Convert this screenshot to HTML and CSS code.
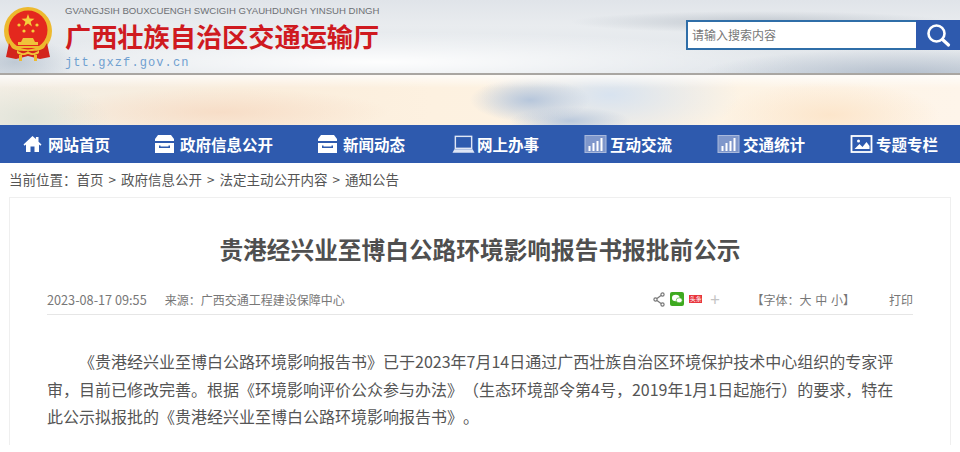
FILE: index.html
```html
<!DOCTYPE html>
<html lang="zh-CN">

<head>
    <meta charset="UTF-8">
    <meta name="viewport" content="width=device-width, initial-scale=1.0">
    <title>贵港经兴业至博白公路环境影响报告书报批前公示</title>
    <link rel="stylesheet" href="styles.css">
</head>

<body>
    <div class="header">
        <div class="top">
            <div class="brand">
                <svg class="emblem" width="50" height="54" viewBox="0 0 50 54">
                    <circle cx="25" cy="24" r="24" fill="#edb92e" />
                    <circle cx="25" cy="23" r="19.500" fill="#e4281e" />
                    <path d="M25 7l1.600 4.600 4.900.1-3.900 3 1.400 4.700-4-2.800-4 2.800 1.400-4.700-3.900-3 4.900-.1z" fill="#f5cf3c" />
                    <circle cx="16" cy="18" r="1.600" fill="#f5cf3c" />
                    <circle cx="34" cy="18" r="1.600" fill="#f5cf3c" />
                    <circle cx="21" cy="24" r="1.600" fill="#f5cf3c" />
                    <circle cx="30" cy="24" r="1.600" fill="#f5cf3c" />
                    <path d="M20 31h10l2 4h3v3H15v-3h3z" fill="#f0c23a" />
                    <path d="M10 39h30v2H10z" fill="#edb92e" />
                    <path d="M6 36l3 5c4 3 10 3 16 3s12 0 16-3l3-5 3 14-10 2-12-3-12 3-10-2z" fill="#d3241c" />
                    <path d="M14 43c4 4 8 4 11 1 3 3 7 3 11-1v3c-4 3-8 2-11 1-3 1-7 2-11-1z" fill="#f0c23a" />
                    <path d="M16 48h3v6h-3zM31 48h3v6h-3z" fill="#edb92e" />
                </svg>
                <div class="brand-text">
                    <div class="zhuang">GVANGJSIH BOUXCUENGH SWCIGIH GYAUHDUNGH YINSUH DINGH</div>
                    <div class="site-name">广西壮族自治区交通运输厅</div>
                    <div class="domain">jtt.gxzf.gov.cn</div>
                </div>
            </div>
            <div class="search">
                <div class="search-input">请输入搜索内容</div>
                <div class="search-btn">
                    <svg width="26" height="26" viewBox="0 0 26 26" fill="none" stroke="#fff">
                        <circle cx="11.500" cy="11.500" r="8" stroke-width="2.600" />
                        <path d="M17.500 17.500l6 5.500" stroke-width="3.200" stroke-linecap="round" />
                    </svg>
                </div>
            </div>
        </div>
    </div>

    <div class="nav">
        <a class="nav-item">
            <svg width="19" height="18" viewBox="0 0 19 18" fill="#fff">
                <path d="M9.500 1L.5 9.500l1.200 1.200L3 9.600V17h4.500v-5.500h4V17H16V9.600l1.300 1.100 1.200-1.200-3-2.800V2h-2.600v2.100z" />
            </svg>
            网站首页
        </a>
        <a class="nav-item">
            <svg width="19" height="18" viewBox="0 0 19 18" fill="#fff">
                <path d="M3 0h13l3 4v2H0V4z" />
                <path d="M0 8h19v10H0zM4 10.500V13h11v-2.500h-1.500v1h-8v-1z" fill-rule="evenodd" />
            </svg>
            政府信息公开
        </a>
        <a class="nav-item">
            <svg width="19" height="18" viewBox="0 0 19 18" fill="#fff">
                <path d="M3 0h13l3 4v2H0V4z" />
                <path d="M0 8h19v10H0zM4 10.500V13h11v-2.500h-1.500v1h-8v-1z" fill-rule="evenodd" />
            </svg>
            新闻动态
        </a>
        <a class="nav-item">
            <svg class="laptop" width="23" height="19" viewBox="0 0 24 19" fill="none" stroke="#dfe6f5">
                <rect x="3.500" y="1" width="17" height="12.500" stroke-width="1.500" />
                <path d="M2.500 14.500h19l2 3.500H.5z" fill="#dfe6f5" stroke="none" />
            </svg>
            网上办事
        </a>
        <a class="nav-item">
            <svg class="icon-wide" width="23" height="18" viewBox="0 0 22 18">
                <rect x=".5" y=".5" width="21" height="17" fill="#7f97cb" stroke="#a9b9dc" />
                <path d="M4 11h2v5H4zM8 8h2v8H8zM12 6h2v10h-2zM16 3h2v13h-2z" fill="#fff" />
            </svg>
            互动交流
        </a>
        <a class="nav-item">
            <svg class="icon-wide" width="23" height="18" viewBox="0 0 22 18">
                <rect x=".5" y=".5" width="21" height="17" fill="#7f97cb" stroke="#a9b9dc" />
                <path d="M4 11h2v5H4zM8 8h2v8H8zM12 6h2v10h-2zM16 3h2v13h-2z" fill="#fff" />
            </svg>
            交通统计
        </a>
        <a class="nav-item">
            <svg class="icon-wide" width="23" height="18" viewBox="0 0 22 18">
                <rect x="1" y="1" width="20" height="16" fill="none" stroke="#fff" stroke-width="1.800" />
                <path d="M4 14l5-5 3 3 4-5 3 4v3z" fill="#fff" />
                <circle cx="8" cy="6" r="1.500" fill="#fff" />
            </svg>
            专题专栏
        </a>
    </div>

    <div class="crumbs">
        当前位置：<a>首页</a><span class="sep">&gt;</span><a>政府信息公开</a><span class="sep">&gt;</span><a>法定主动公开内容</a><span class="sep">&gt;</span><a>通知公告</a>
    </div>

    <div class="article">
        <h1>贵港经兴业至博白公路环境影响报告书报批前公示</h1>
        <div class="meta">
            <span class="date">2023-08-17 09:55</span>
            <span class="source">来源：广西交通工程建设保障中心</span>
            <div class="tools">
                <svg class="share" width="12" height="15" viewBox="0 0 12 15" fill="none" stroke="#777" stroke-width="1.200">
                    <circle cx="9.500" cy="2.500" r="1.600" />
                    <circle cx="2.500" cy="7.500" r="1.600" />
                    <circle cx="9.500" cy="12.500" r="1.600" />
                    <path d="M8 3.500L4 6.500M4 8.500l4 3" />
                </svg>
                <svg class="wechat" width="14" height="14" viewBox="0 0 14 14">
                    <rect width="14" height="14" rx="2" fill="#3eaa20" />
                    <ellipse cx="5.800" cy="6" rx="3.800" ry="3.200" fill="#fff" />
                    <ellipse cx="9.200" cy="8.300" rx="3" ry="2.500" fill="#fff" stroke="#3eaa20" stroke-width=".6" />
                </svg>
                <span class="badge">头条</span>
                <span class="plus">+</span>
            </div>
            <span class="fontsize">【字体：大 中 小】</span>
            <span class="print">打印</span>
        </div>
        <div class="content">
            <p>《贵港经兴业至博白公路环境影响报告书》已于2023年7月14日通过广西壮族自治区环境保护技术中心组织的专家评审，目前已修改完善。根据《环境影响评价公众参与办法》（生态环境部令第4号，2019年1月1日起施行）的要求，特在此公示拟报批的《贵港经兴业至博白公路环境影响报告书》。</p>
        </div>
    </div>
</body>

</html>
```

FILE: styles.css
```css
* {
    box-sizing: border-box;
}

body {
    margin: 0;
    padding: 0;
    background: #fff;
    font-family: "Noto Sans CJK SC", "Liberation Sans", sans-serif;
    font-feature-settings: "chws" 0, "palt" 0;
    text-spacing-trim: space-all;
    color: #555;
    height: 452px;
    overflow: hidden;
}

.header {
    height: 125px;
    background:
        linear-gradient(180deg, rgba(255, 255, 255, 0) 60px, rgba(255, 255, 255, 0.7) 76px, rgba(255, 255, 255, 0) 88px),
        radial-gradient(ellipse 60px 22px at 530px 100px, rgba(176, 194, 218, 0.9), transparent),
        radial-gradient(ellipse 60px 14px at 570px 121px, rgba(176, 194, 218, 0.85), transparent),
        radial-gradient(ellipse 130px 50px at 610px 95px, rgba(214, 226, 240, 0.95), transparent),
        radial-gradient(ellipse 170px 24px at 220px 112px, rgba(246, 216, 192, 0.75), transparent),
        radial-gradient(ellipse 80px 34px at 30px 118px, rgba(222, 226, 216, 0.9), transparent),
        radial-gradient(ellipse 110px 34px at 830px 115px, rgba(252, 228, 200, 0.9), transparent),
        linear-gradient(90deg, #f3eee4 0%, #faeddc 25%, #fdf1e0 45%, #fdf3e4 75%, #fef5ea 100%);
}

.top {
    height: 75px;
    display: flex;
    justify-content: space-between;
    align-items: flex-start;
    border-bottom: 2px solid #a9a6a2;
    background:
        radial-gradient(ellipse 200px 26px at 900px 75px, rgba(150, 165, 185, 0.6), transparent),
        radial-gradient(ellipse 190px 11px at 760px 22px, rgba(180, 188, 197, 0.75), transparent),
        radial-gradient(ellipse 60px 24px at 15px 62px, rgba(175, 188, 202, 0.7), transparent),
        radial-gradient(ellipse 420px 30px at 380px 62px, rgba(255, 255, 255, 0.95), transparent),
        linear-gradient(180deg, #e0e4e9 0%, #e9ecef 35%, #dfe4e9 100%);
}

.brand {
    display: flex;
    padding: 7px 0 0 3px;
}

.emblem {
    flex: none;
}

.brand-text {
    margin-left: 12px;
    margin-top: -3px;
}

.zhuang {
    font-family: "Liberation Sans", sans-serif;
    font-size: 9.600px;
    line-height: 13px;
    color: #6d7074;
    white-space: nowrap;
}

.site-name {
    font-size: 26.200px;
    font-weight: 700;
    line-height: 34px;
    margin-top: 2px;
    color: #cf1a1f;
    white-space: nowrap;
}

.domain {
    font-family: "Liberation Mono", monospace;
    font-size: 12px;
    line-height: 14px;
    letter-spacing: 1.100px;
    color: #6f9fd0;
    margin-top: 3px;
}

.search {
    display: flex;
    width: 274px;
    height: 30px;
    margin-top: 20px;
}

.search-input {
    flex: 1;
    background: #fff;
    border: 2px solid #2f6ea8;
    border-right: 0;
    font-size: 12px;
    line-height: 26px;
    padding-left: 4px;
    color: #777;
}

.search-btn {
    width: 44px;
    background: #2e5aae;
    display: flex;
    align-items: center;
    justify-content: center;
}

.nav {
    height: 38px;
    background: #2e5aae;
    display: flex;
    align-items: center;
    gap: 45px;
    padding-left: 23px;
}

.nav-item {
    display: flex;
    align-items: center;
    color: #fff;
    font-size: 15.500px;
    font-weight: 700;
    white-space: nowrap;
}

.nav-item svg {
    margin-right: 6px;
}

.nav-item .icon-wide {
    margin-right: 3px;
}

.nav-item .laptop {
    margin: 0 2px;
}

.crumbs {
    height: 34px;
    padding-left: 9px;
    font-size: 13.500px;
    line-height: 33px;
    color: #555;
}

.sep {
    margin: 0 5px;
}

.article {
    margin: 0 9px;
    height: 248px;
    border: 1px solid #efefef;
    border-bottom: 0;
    padding: 0 37px;
}

h1 {
    margin: 0;
    padding-top: 34px;
    font-size: 23.700px;
    line-height: 34px;
    font-weight: 700;
    text-align: center;
    color: #4f4f4f;
}

.meta {
    display: flex;
    align-items: center;
    height: 34px;
    margin-top: 15px;
    padding-top: 3px;
    border-bottom: 1px solid #e6e6e6;
    font-size: 12px;
    color: #777;
}

.date {
    font-size: 12.700px;
}

.source {
    margin-left: 18px;
}

.tools {
    display: flex;
    align-items: center;
    gap: 5px;
    margin-left: auto;
}

.badge {
    width: 13px;
    height: 8px;
    background: #e8343c;
    color: #fff;
    font-size: 6px;
    line-height: 8px;
    text-align: center;
    white-space: nowrap;
    overflow: hidden;
}

.plus {
    font-size: 17px;
    line-height: 14px;
    color: #c4c4c4;
    margin-left: 3px;
}

.fontsize {
    margin-left: 32px;
    word-spacing: 1px;
}

.print {
    margin-left: 34px;
}

.content {
    padding: 33px 5px 0 0;
    font-size: 16px;
    line-height: 27.500px;
    color: #555;
}

.content p {
    margin: 0;
    text-indent: 2em;
}
```
